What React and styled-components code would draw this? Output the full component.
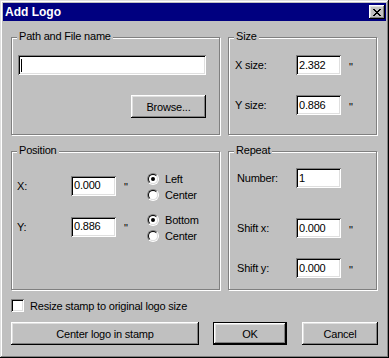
import React from 'react'
import styled, { createGlobalStyle } from 'styled-components'

const Global = createGlobalStyle`
    html, body {
        margin: 0;
        padding: 0;
        background: #c0c0c0;
    }
    body {
        font-family: 'Liberation Sans', Arial, sans-serif;
        font-size: 11px;
        letter-spacing: -0.2px;
        color: #000;
    }
`

const Janela = styled.div`
    width: 389px;
    height: 358px;
    box-sizing: border-box;
    padding: 3px;
    background: #c0c0c0;
    box-shadow: inset -1px -1px 0 #000, inset 1px 1px 0 #dfdfdf,
        inset -2px -2px 0 #808080, inset 2px 2px 0 #fff;
    display: flex;
    flex-direction: column;
`

const BarraTitulo = styled.div`
    height: 18px;
    background: #000080;
    color: #fff;
    display: flex;
    align-items: center;
    justify-content: space-between;
    padding: 0 1px 0 2px;
    font-weight: bold;
    font-size: 12px;
    letter-spacing: 0;
`

const BotaoFechar = styled.div`
    width: 16px;
    height: 14px;
    box-sizing: border-box;
    background: #c0c0c0;
    box-shadow: inset -1px -1px 0 #000, inset 1px 1px 0 #fff,
        inset -2px -2px 0 #808080, inset 2px 2px 0 #dfdfdf;
    display: flex;
    align-items: center;
    justify-content: center;
    padding-right: 1px;
`

const Conteudo = styled.div`
    padding: 0 8px;
    display: flex;
    flex-direction: column;
`

const Grade = styled.div`
    margin-top: 16px;
    display: grid;
    grid-template-columns: 209px 149px;
    grid-template-rows: 98px 139px;
    gap: 16px 8px;
`

const Grupo = styled.div`
    position: relative;
    box-sizing: border-box;
    border: 1px solid #808080;
    box-shadow: 1px 1px 0 #fff, inset 1px 1px 0 #fff;
    display: flex;
    flex-direction: column;
    padding: ${p => p.$pad};
`

const Legenda = styled.span`
    position: absolute;
    top: -8px;
    left: 5px;
    padding: 0 2px;
    line-height: 13px;
    background: #c0c0c0;
`

const Campo = styled.div`
    width: ${p => p.$w || 45}px;
    height: 20px;
    flex-shrink: 0;
    box-sizing: border-box;
    background: #fff;
    box-shadow: inset 1px 1px 0 #808080, inset -1px -1px 0 #fff,
        inset 2px 2px 0 #000, inset -2px -2px 0 #dfdfdf;
    padding: 0 3px;
    display: flex;
    align-items: center;
    line-height: 13px;
`

const Cursor = styled.span`
    width: 1px;
    height: 13px;
    background: #000;
`

const Botao = styled.div`
    width: ${p => p.$w}px;
    height: 23px;
    box-sizing: border-box;
    background: #c0c0c0;
    box-shadow: ${p => p.$padrao
        ? 'inset 0 0 0 1px #000, inset -2px -2px 0 #000, inset 2px 2px 0 #fff, inset -3px -3px 0 #808080, inset 3px 3px 0 #dfdfdf'
        : 'inset -1px -1px 0 #000, inset 1px 1px 0 #fff, inset -2px -2px 0 #808080, inset 2px 2px 0 #dfdfdf'};
    display: flex;
    align-items: center;
    justify-content: center;
`

const Linha = styled.div`
    display: flex;
    align-items: center;
    margin-top: ${p => p.$mt || 0}px;
`

const Rotulo = styled.span`
    width: ${p => p.$w}px;
    flex-shrink: 0;
`

const Unidade = styled.span`
    width: 23px;
    margin-left: 8px;
    line-height: 13px;
    padding-top: 4px;
`

const Radios = styled.div`
    display: flex;
    flex-direction: column;
    margin-top: 3px;
`

const OpcaoRadio = styled.div`
    display: flex;
    align-items: center;
    height: 16px;
    gap: 6px;
`

const Circulo = styled.span`
    width: 12px;
    height: 12px;
    box-sizing: border-box;
    border-radius: 50%;
    border: 1px solid;
    border-color: #808080 #fff #fff #808080;
    display: flex;
`

const CirculoInterno = styled.span`
    flex: 1;
    border-radius: 50%;
    border: 1px solid;
    border-color: #000 #dfdfdf #dfdfdf #000;
    background: #fff;
    display: flex;
    align-items: center;
    justify-content: center;
`

const Ponto = styled.span`
    width: 4px;
    height: 4px;
    border-radius: 50%;
    background: #000;
`

const LinhaCheck = styled.div`
    display: flex;
    align-items: center;
    gap: 6px;
    margin-top: 9px;
    height: 13px;
`

const Caixa = styled.span`
    width: 13px;
    height: 13px;
    box-sizing: border-box;
    background: #fff;
    box-shadow: inset 1px 1px 0 #808080, inset -1px -1px 0 #fff,
        inset 2px 2px 0 #000, inset -2px -2px 0 #dfdfdf;
`

const Rodape = styled.div`
    display: flex;
    margin-top: 10px;
`

const Espaco = styled.span`
    width: ${p => p.$w}px;
    flex-shrink: 0;
`

const xPixels = [
    [0, 0], [1, 0], [6, 0], [7, 0],
    [1, 1], [2, 1], [5, 1], [6, 1],
    [2, 2], [3, 2], [4, 2], [5, 2],
    [3, 3], [4, 3],
    [2, 4], [3, 4], [4, 4], [5, 4],
    [1, 5], [2, 5], [5, 5], [6, 5],
    [0, 6], [1, 6], [6, 6], [7, 6],
]

function Radio({ marcado, children }) {
    return (
        <OpcaoRadio>
            <Circulo>
                <CirculoInterno>{marcado && <Ponto />}</CirculoInterno>
            </Circulo>
            {children}
        </OpcaoRadio>
    )
}

export default function App() {
    return (
        <>
            <Global />
            <Janela>
                <BarraTitulo>
                    <span>Add Logo</span>
                    <BotaoFechar>
                        <svg width="8" height="7" viewBox="0 0 8 7" shapeRendering="crispEdges">
                            {xPixels.map(([x, y]) => (
                                <rect key={x + '-' + y} x={x} y={y} width="1" height="1" fill="#000" />
                            ))}
                        </svg>
                    </BotaoFechar>
                </BarraTitulo>

                <Conteudo>
                    <Grade>
                        <Grupo $pad="17px 0 0 6px">
                            <Legenda>Path and File name</Legenda>
                            <Campo $w={188}><Cursor /></Campo>
                            <Linha $mt={20}>
                                <Espaco $w={113} />
                                <Botao $w={75}>Browse...</Botao>
                            </Linha>
                        </Grupo>

                        <Grupo $pad="17px 0 0 6px">
                            <Legenda>Size</Legenda>
                            <Linha>
                                <Rotulo $w={61}>X size:</Rotulo>
                                <Campo>2.382</Campo>
                                <Unidade>"</Unidade>
                            </Linha>
                            <Linha $mt={20}>
                                <Rotulo $w={61}>Y size:</Rotulo>
                                <Campo>0.886</Campo>
                                <Unidade>"</Unidade>
                            </Linha>
                        </Grupo>

                        <Grupo $pad="16px 0 0 5px">
                            <Legenda>Position</Legenda>
                            <Linha>
                                <Rotulo $w={54}>X:</Rotulo>
                                <Campo>0.000</Campo>
                                <Unidade>"</Unidade>
                                <Radios>
                                    <Radio marcado>Left</Radio>
                                    <Radio>Center</Radio>
                                </Radios>
                            </Linha>
                            <Linha $mt={6}>
                                <Rotulo $w={54}>Y:</Rotulo>
                                <Campo>0.886</Campo>
                                <Unidade>"</Unidade>
                                <Radios>
                                    <Radio marcado>Bottom</Radio>
                                    <Radio>Center</Radio>
                                </Radios>
                            </Linha>
                        </Grupo>

                        <Grupo $pad="16px 0 0 8px">
                            <Legenda>Repeat</Legenda>
                            <Linha>
                                <Rotulo $w={59}>Number:</Rotulo>
                                <Campo>1</Campo>
                            </Linha>
                            <Linha $mt={30}>
                                <Rotulo $w={59}>Shift x:</Rotulo>
                                <Campo>0.000</Campo>
                                <Unidade>"</Unidade>
                            </Linha>
                            <Linha $mt={20}>
                                <Rotulo $w={59}>Shift y:</Rotulo>
                                <Campo>0.000</Campo>
                                <Unidade>"</Unidade>
                            </Linha>
                        </Grupo>
                    </Grade>

                    <LinhaCheck>
                        <Caixa />
                        <span>Resize stamp to original logo size</span>
                    </LinhaCheck>

                    <Rodape>
                        <Botao $w={188}>Center logo in stamp</Botao>
                        <Espaco $w={14} />
                        <Botao $w={74} $padrao>OK</Botao>
                        <Espaco $w={15} />
                        <Botao $w={76}>Cancel</Botao>
                    </Rodape>
                </Conteudo>
            </Janela>
        </>
    )
}
